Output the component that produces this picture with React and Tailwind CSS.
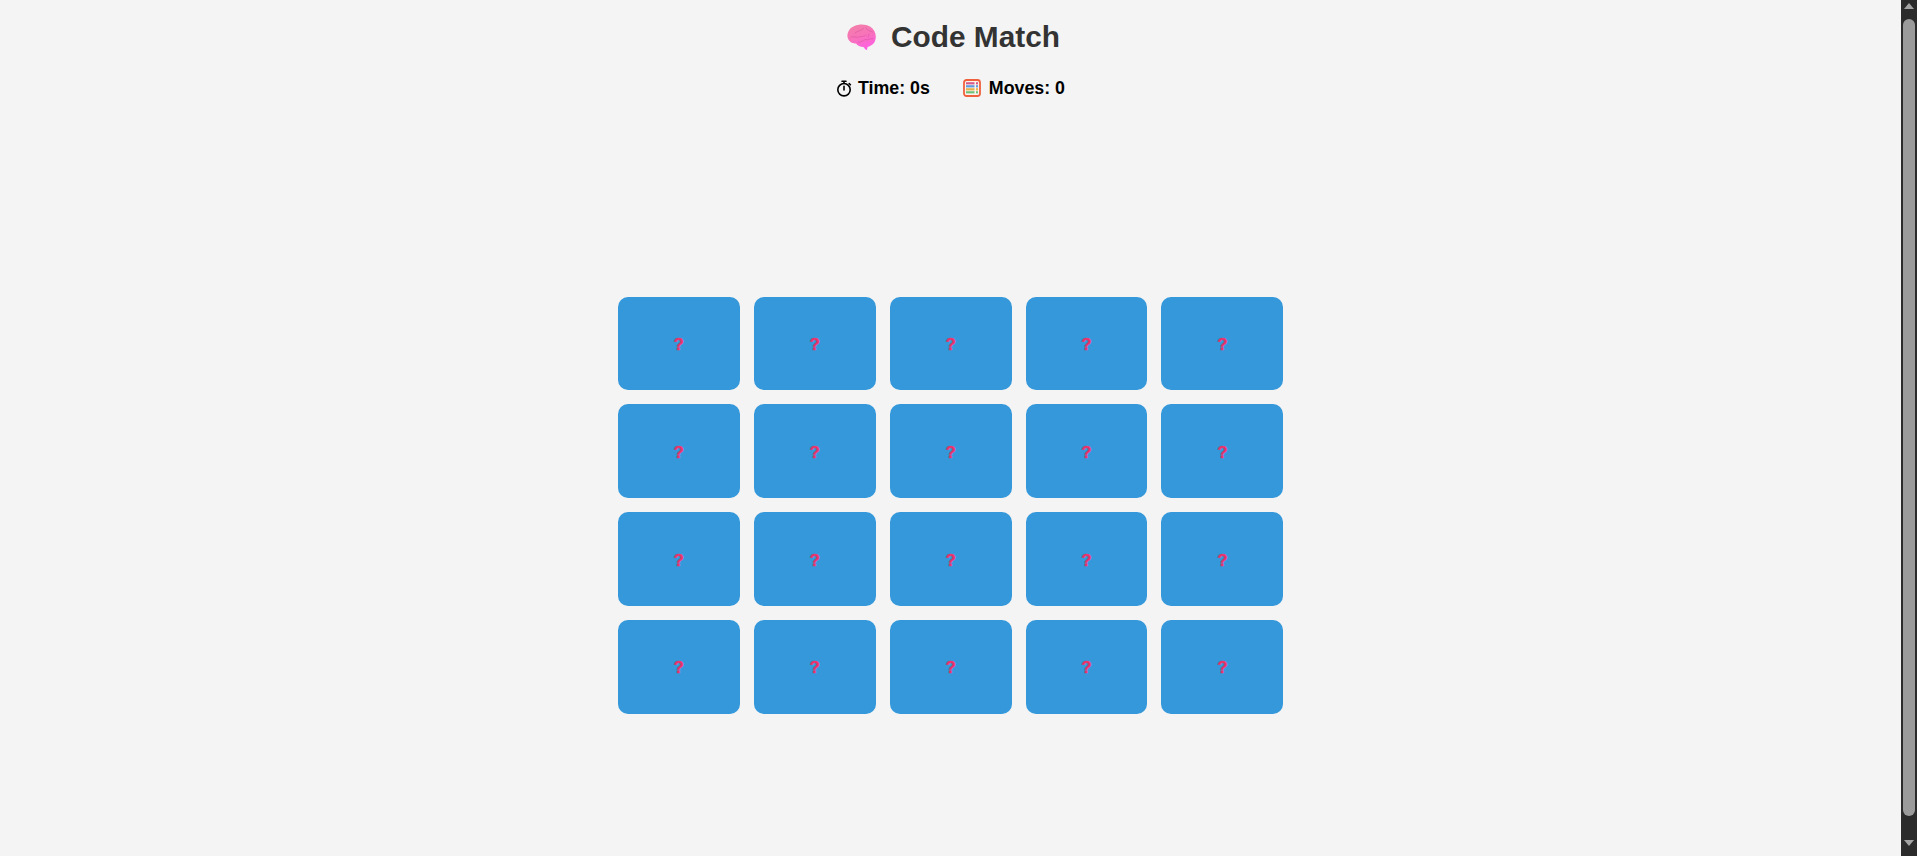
import React from 'react';

function Brain() {
  return (
    <svg width="29" height="26" viewBox="0 0 29 26" className="shrink-0">
      <defs>
        <linearGradient id="brainFill" x1="0.25" y1="0" x2="0.65" y2="1">
          <stop offset="0" stopColor="#f27fa8" />
          <stop offset="0.5" stopColor="#f872bc" />
          <stop offset="1" stopColor="#ff5ee6" />
        </linearGradient>
      </defs>
      <path
        d="M0.5 13C0 8 3 3.5 7.5 2C12 -0.2 19 0 23 2.5C27 5 29 9 28.8 13.5C28.5 18 26 21 22 22.5L20.5 23L20 26L18.5 25.5L16.5 23C13 23 10.5 21.5 9 19.5C5 19.5 1.5 17.5 0.5 13Z"
        fill="url(#brainFill)"
      />
      <g fill="none" stroke="#d9549e" strokeWidth="0.8" strokeLinecap="round" opacity="0.7">
        <path d="M8 9C11 6.5 14 7 16.5 4.5" />
        <path d="M19 4C21 7 23 7 25.5 8" />
        <path d="M4 13C7 12 9 14 12 13C15 12 17 13 19 11" />
        <path d="M11 18.5C14 17.5 16 17.5 18 15.5C21 16.5 23 14.5 26 14.5" />
        <path d="M22 10L21 13" />
      </g>
    </svg>
  );
}

function Stopwatch() {
  return (
    <svg width="16" height="17" viewBox="0 0 16 17" fill="none" stroke="#000" strokeWidth="1.6" className="shrink-0">
      <circle cx="8" cy="9.7" r="6.2" />
      <path d="M6 1.2H10M8 1.5V3.5M8 6.2V10M13.2 3.5L14.4 4.7" strokeLinecap="round" />
    </svg>
  );
}

function Abacus() {
  const rows = ['#d65a8a', '#5b9be0', '#e8b04a', '#6fc07a'];
  return (
    <svg width="18" height="18" viewBox="0 0 18 18" className="shrink-0">
      <rect x="1" y="1" width="16" height="16" rx="2.5" fill="#fbf3ee" stroke="#f0603c" strokeWidth="1.8" />
      {rows.map((c, i) => (
        <g key={c}>
          <rect x="3" y={3.2 + i * 3} width="8.5" height="2.2" fill={c} />
          <rect x="13" y={3.2 + i * 3} width="2" height="2.2" fill={c} />
        </g>
      ))}
    </svg>
  );
}

function Card() {
  return (
    <div className="h-[93.8px] rounded-[10px] bg-[#3498db] flex items-center justify-center">
      <span className="mt-[2px] text-[17px] leading-none font-bold text-[#e8336b] [-webkit-text-stroke:0.4px_#e8336b]">?</span>
    </div>
  );
}

export default function App() {
  const cards = Array.from({ length: 20 }, (_, i) => i);

  return (
    <div className="flex h-[856px] overflow-hidden bg-[#f4f4f4] font-['Liberation_Sans',Arial,sans-serif]">
      <main className="flex-1 flex flex-col items-center">
        <h1 className="mt-[20px] ml-[6px] flex items-center gap-[15px] text-[29.8px] leading-[34px] font-bold text-[#333]">
          <Brain />
          <span>Code Match</span>
        </h1>

        <div className="mt-[24px] flex items-center gap-[33px] text-[17.8px] leading-[20px] font-bold text-black">
          <div className="flex items-center gap-[6px]">
            <Stopwatch />
            <span>Time: 0s</span>
          </div>
          <div className="flex items-center gap-[8px]">
            <Abacus />
            <span>Moves: 0</span>
          </div>
        </div>

        <div className="mt-[198.6px] ml-[0.2px] w-[665.6px] grid grid-cols-5 gap-[14px]">
          {cards.map((i) => (
            <Card key={i} />
          ))}
        </div>
      </main>

      {/* scrollbar */}
      <div className="w-[16px] bg-[#2b2b2b] flex flex-col items-center">
        <div className="mt-[3px] w-0 h-0 border-x-[5px] border-x-transparent border-b-[6px] border-b-[#a3a3a3]" />
        <div className="mt-[10px] w-[12px] h-[797px] rounded-full bg-[#9b9b9b]" />
        <div className="mt-[24px] w-0 h-0 border-x-[5px] border-x-transparent border-t-[6px] border-t-[#a3a3a3]" />
      </div>
    </div>
  );
}
